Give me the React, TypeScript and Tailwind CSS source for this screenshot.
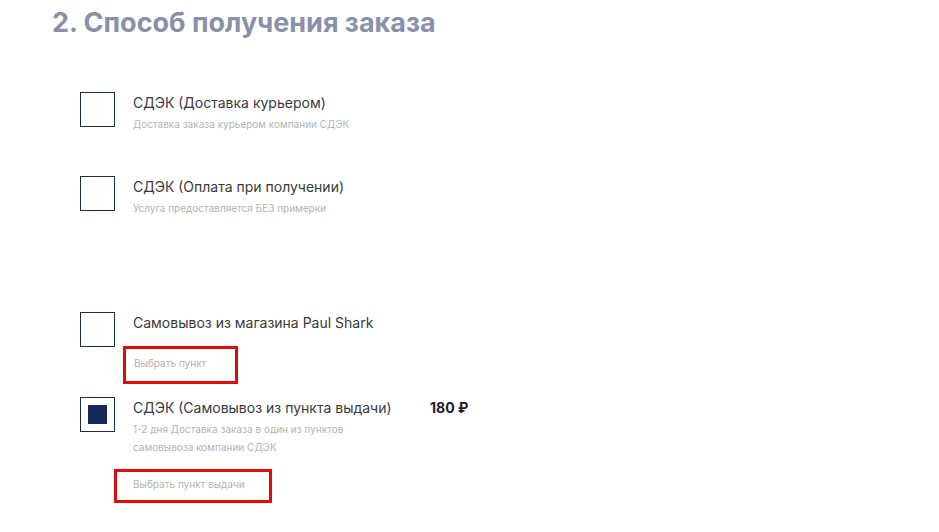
import React from "react";

type Option = {
  title: string;
  note?: string;
  price?: string;
  picker?: string;
  checked?: boolean;
};

function Checkbox({ checked }: { checked?: boolean }) {
  return (
    <div className="w-[35px] h-[35px] shrink-0 border border-[#1c2b4f] flex items-center justify-center">
      {checked && <div className="w-[19px] h-[19px] bg-[#17295c]" />}
    </div>
  );
}

function DeliveryRow({ option, className }: { option: Option; className?: string }) {
  return (
    <div className={`flex items-start gap-[18px] ${className ?? ""}`}>
      <Checkbox checked={option.checked} />
      <div className="flex flex-col">
        <div className="flex mt-[1px]">
          <p className="w-[297px] shrink-0 text-[14px] leading-5 text-[#3a3a3a]">{option.title}</p>
          {option.price && (
            <p className="text-[14px] leading-5 font-bold text-[#1b1b2f]">{option.price}</p>
          )}
        </div>
        {option.note && (
          <p className="mt-[2px] max-w-[230px] text-[10px] leading-[18px] text-[#b3b3b3]">{option.note}</p>
        )}
        {option.picker && (
          <div
            className={
              option.checked
                ? "mt-[13px] ml-[-19px] w-[158px] h-[34px] border-[3px] border-[#e50a0a] flex items-center pl-[16px] pb-[4px]"
                : "mt-[13px] ml-[-10px] w-[115px] h-[38px] border-[3px] border-[#e50a0a] flex items-center pl-[8px] pb-[5px]"
            }
          >
            <span className="text-[10px] leading-[18px] text-[#b3b3b3]">{option.picker}</span>
          </div>
        )}
      </div>
    </div>
  );
}

export default function App() {
  return (
    <div className="w-[939px] h-[532px] bg-white font-['Inter',sans-serif] pl-[52px] pt-[5px] overflow-hidden">
      <h2 className="text-[27px] leading-9 font-bold text-[#8990aa]">2. Способ получения заказа</h2>
      <div className="flex flex-col pl-[28px] mt-[51px]">
        <DeliveryRow
          option={{ title: "СДЭК (Доставка курьером)", note: "Доставка заказа курьером компании СДЭК" }}
        />
        <DeliveryRow
          className="mt-[43px]"
          option={{ title: "СДЭК (Оплата при получении)", note: "Услуга предоставляется БЕЗ примерки" }}
        />
        <DeliveryRow
          className="mt-[95px]"
          option={{ title: "Самовывоз из магазина Paul Shark", picker: "Выбрать пункт" }}
        />
        <DeliveryRow
          className="mt-[13px]"
          option={{
            title: "СДЭК (Самовывоз из пункта выдачи)",
            price: "180 ₽",
            note: "1-2 дня Доставка заказа в один из пунктов самовывоза компании СДЭК",
            picker: "Выбрать пункт выдачи",
            checked: true,
          }}
        />
      </div>
    </div>
  );
}
